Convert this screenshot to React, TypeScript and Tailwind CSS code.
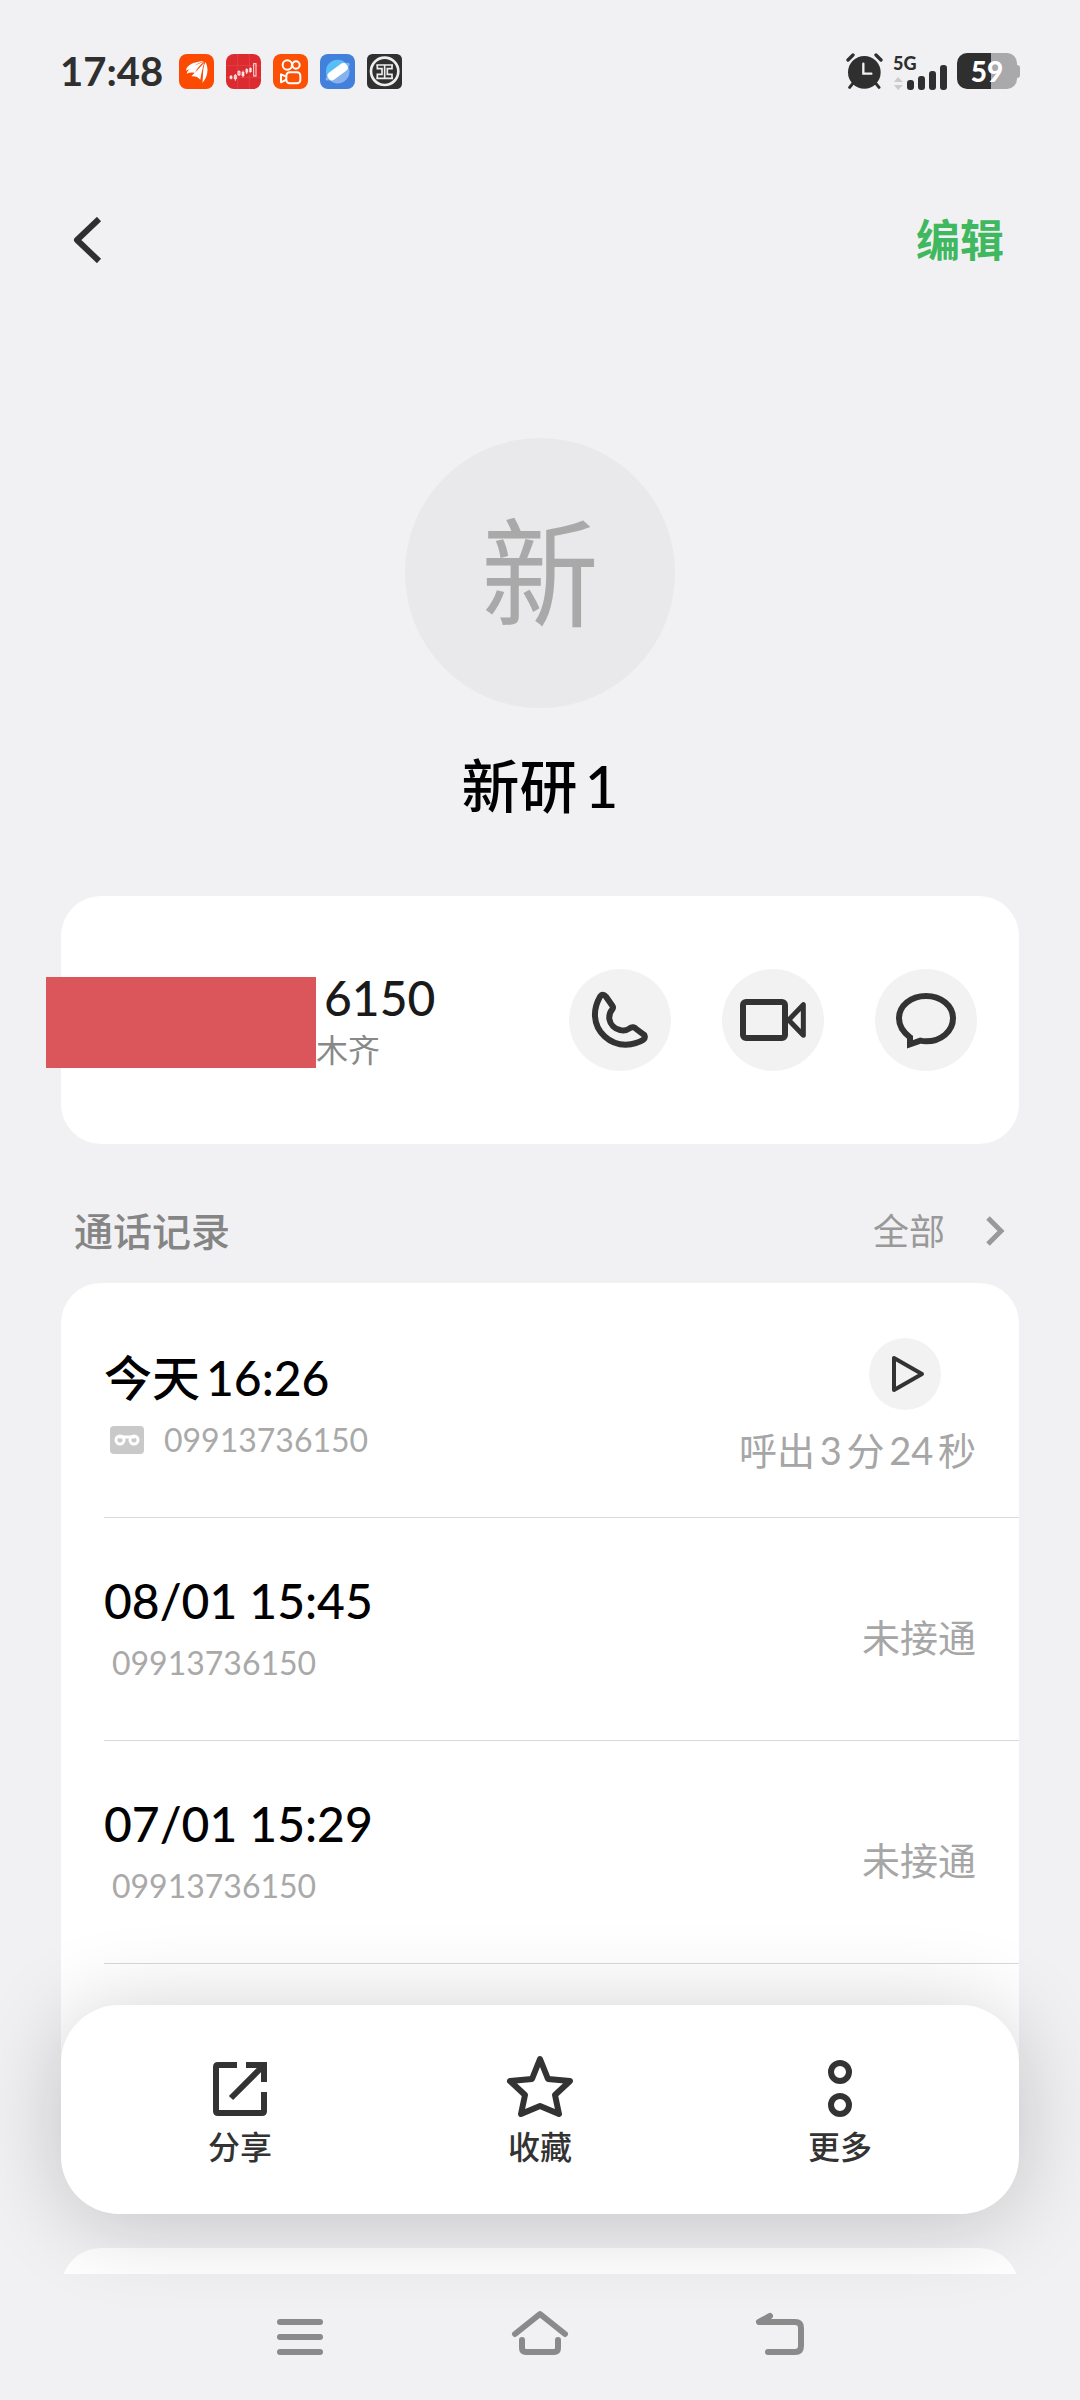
import type { ReactNode } from "react";

const calls = [
  { time: "今天16:26", number: "09913736150", status: "呼出3分24秒", recorded: true },
  { time: "08/01 15:45", number: "09913736150", status: "未接通", recorded: false },
  { time: "07/01 15:29", number: "09913736150", status: "未接通", recorded: false },
];

function StatusBar() {
  return (
    <div className="flex h-[142px] shrink-0 items-center justify-between px-[60px] text-[#2f2f2f]">
      <div className="flex items-center gap-3">
        <span className="mr-1 text-[40px] leading-[48px] font-bold">17:48</span>
        <svg className="size-[35px]" viewBox="0 0 105 105" fill="#fff">
          <rect width="105" height="105" rx="24" fill="#fc4a02" />
          <path d="M21 50C22 32 46 23 77 21C62 25 48 31 40 45C33 45 27 47 21 50Z" />
          <path d="M23 59C26 44 52 30 75 24C63 33 53 44 48 57C39 54 31 56 23 59Z" />
          <path d="M37 67C52 52 66 36 75 27C71 42 67 58 64 77C57 69 48 66 37 67Z" />
          <path d="M79 24C90 42 87 68 70 87C74 66 69 46 79 24Z" />
        </svg>
        <svg className="size-[35px]" viewBox="0 0 105 105">
          <rect width="105" height="105" rx="24" fill="#dc2a31" />
          <path d="M0 35H105M0 70H105M35 0V105M70 0V105" stroke="#e4474c" strokeWidth="2" />
          <g fill="none" stroke="#fde8e8" strokeWidth="3">
            <path d="M15 63V76M28 60V80M39 49V66M51 50V70M62 43V60M73 40V56" />
            <rect x="25" y="65" width="6" height="9" />
            <rect x="36" y="53" width="6" height="9" />
            <rect x="60" y="47" width="5" height="7" />
            <rect x="83" y="29" width="7" height="37" />
          </g>
          <path d="M11 66h8v8h-8zM47 54h8v12h-8zM70 42h7v12h-7z" fill="#fde8e8" />
        </svg>
        <svg className="size-[35px]" viewBox="0 0 105 105" fill="none" stroke="#fff" strokeWidth="6">
          <rect width="105" height="105" rx="24" fill="#fc5004" stroke="none" />
          <circle cx="43" cy="33" r="14" />
          <circle cx="69" cy="33" r="11" />
          <rect x="40" y="55" width="42" height="33" rx="10" />
          <path d="M40 68L24 61V85L40 77" strokeLinejoin="round" />
        </svg>
        <svg className="size-[35px]" viewBox="0 0 105 105">
          <rect width="105" height="105" rx="24" fill="#4380dc" />
          <circle cx="53" cy="52" r="35" fill="#59bdf8" />
          <path d="M19 62A35 35 0 0 0 87 44Z" fill="#88b2ee" />
          <ellipse cx="53" cy="53" rx="43" ry="12" transform="rotate(-35 53 53)" fill="#7fb6f2" />
          <rect x="19" y="40" width="68" height="26" rx="12" transform="rotate(-36 53 53)" fill="#fff" />
        </svg>
        <svg className="size-[35px]" viewBox="0 0 105 105" fill="none" stroke="#eee">
          <rect width="105" height="105" rx="16" fill="#303030" stroke="none" />
          <circle cx="53" cy="52" r="41" strokeWidth="8" />
          <path d="M28 33H78M28 73H78M53 33V43M53 62V73M53 43V62" strokeWidth="5" />
          <path d="M31 33V44H45V61H31V73M75 33V44H61V61H75V73" strokeWidth="5" />
        </svg>
      </div>
      <div className="flex items-center gap-[10px]">
        <svg className="h-9 w-[37px]" viewBox="0 0 111 108" fill="none" stroke="#2f2f2f" strokeLinecap="round">
          <circle cx="55" cy="58" r="49" fill="#2f2f2f" stroke="none" />
          <path d="M6 21L21 6M105 21L90 6" strokeWidth="10" />
          <path d="M20 92L11 103M90 92L99 103" strokeWidth="9" />
          <path d="M52 32V62H76" stroke="#f1f1f3" strokeWidth="7" />
        </svg>
        <div className="flex w-[54px] flex-col">
          <span className="text-[18px] leading-5 font-black">5G</span>
          <svg className="-mt-2 h-[25px] w-[54px]" viewBox="0 11 54 25" fill="#2f2f2f">
            <path d="M1 28L5 23L10 28ZM1 31H10L5 36Z" fill="#cbcbcd" />
            <rect x="14" y="26" width="7" height="10" rx="3" />
            <rect x="25" y="22" width="7" height="14" rx="3" />
            <rect x="36" y="17" width="7" height="19" rx="3" />
            <rect x="47" y="11" width="7" height="25" rx="3" />
          </svg>
        </div>
        <div className="flex items-center">
          <div className="flex h-9 w-[60px] items-center justify-center rounded-[10px] bg-linear-to-r from-[#2f2f2f] from-57% to-[#a9a9ab] to-57% text-[28px] leading-9 font-black text-white">
            59
          </div>
          <div className="h-[13px] w-[3px] rounded-r bg-[#a9a9ab]" />
        </div>
      </div>
    </div>
  );
}

function RoundButton({ label, children }: { label: string; children: ReactNode }) {
  return (
    <button aria-label={label} className="size-[102px] rounded-full bg-[#f2f2f2]">
      <svg className="size-full" viewBox="0 0 306 306" fill="none" stroke="#333" strokeWidth="18">
        {children}
      </svg>
    </button>
  );
}

function Action({ label, children }: { label: string; children: ReactNode }) {
  return (
    <button className="flex flex-1 flex-col items-center gap-2 text-[32px] leading-[40px] font-medium text-[#333]">
      <svg className="size-[66px]" viewBox="0 0 66 66" fill="none" stroke="#333" strokeWidth="6">
        {children}
      </svg>
      {label}
    </button>
  );
}

function NavButton({ label, d }: { label: string; d: string }) {
  return (
    <button aria-label={label} className="flex w-[240px] items-center justify-center">
      <svg className="size-[60px]" viewBox="0 0 60 60" fill="none" stroke="#8a8a8a" strokeWidth="6" strokeLinecap="round" strokeLinejoin="round">
        <path d={d} />
      </svg>
    </button>
  );
}

export default function App() {
  return (
    <div className="relative flex h-screen flex-col overflow-hidden bg-[#f1f1f3] font-['Lato','Noto_Sans_CJK_SC',sans-serif] [text-autospace:normal]">
      <StatusBar />

      <header className="flex h-[196px] shrink-0 items-center justify-between pr-[76px] pl-[72px]">
        <button aria-label="返回">
          <svg className="h-[46px] w-[30px]" viewBox="0 0 30 46" fill="none" stroke="#2f2f2f" strokeWidth="6" strokeLinejoin="round">
            <path d="M27 2L5 23L27 44" />
          </svg>
        </button>
        <button className="text-[44px] leading-[56px] font-bold text-[#3fb85f]">编辑</button>
      </header>

      <main className="min-h-0 flex-1 overflow-hidden px-[61px]">
        <div className="flex flex-col items-center pt-[100px]">
          <div className="flex size-[270px] items-center justify-center rounded-full bg-[#e9e9eb] text-[118px] leading-none text-[#a9a9a9]">
            新
          </div>
          <h1 className="mt-[39px] text-[58px] leading-[78px] font-medium text-black">新研1</h1>
        </div>

        <section className="mt-[71px] flex h-[248px] items-center justify-between rounded-[40px] bg-white pr-[42px]">
          <div className="-ml-[15px] flex items-center pt-1">
            <div className="h-[91px] w-[270px] bg-[#da565b]" />
            <div>
              <p className="pl-2 text-[48px] leading-[56px] font-medium text-[#1a1a1a]">6150</p>
              <p className="text-[32px] leading-[48px] text-[#888]">木齐</p>
            </div>
          </div>
          <div className="flex gap-[51px]">
            <RoundButton label="拨打电话">
              <path d="M111 83Q101 71 93 83C82 102 77 122 78 142C81 190 122 227 170 227C190 226 208 222 223 212Q230 206 226 198L203 181C197 174 189 172 182 178C172 185 162 186 153 183C138 180 124 168 121 150C120 138 122 130 130 121Q134 116 130 110Z" />
            </RoundButton>
            <RoundButton label="视频通话">
              <rect x="63" y="99" width="126" height="108" rx="9" />
              <path d="M200 153L244 107V199Z" strokeWidth="15" strokeLinejoin="round" />
            </RoundButton>
            <RoundButton label="发送信息">
              <path d="M105 226V205C85 190 72 170 72 148C72 110 108 81 153 81C198 81 234 110 234 148C234 187 198 217 153 217Q144 217 136 215Z" />
            </RoundButton>
          </div>
        </section>

        <div className="flex h-[139px] items-center justify-between pt-[35px] pr-[14px] pl-[13px]">
          <h2 className="text-[39px] leading-[48px] font-medium text-[#858585]">通话记录</h2>
          <a href="#all" className="flex items-center gap-10 text-[36px] leading-[48px] text-[#999]">
            全部
            <svg className="h-8 w-5" viewBox="0 0 20 32" fill="none" stroke="#999" strokeWidth="5">
              <path d="M3 3L16 16L3 29" />
            </svg>
          </a>
        </div>

        <ul className="rounded-[40px] bg-white py-3 pl-[43px]">
          {calls.map((call) => (
            <li key={call.time} className="flex h-[223px] items-center justify-between border-b border-[#d9d9d9] pr-[43px]">
              <div className="pt-1">
                <p className="text-[48px] leading-[64px] font-medium text-black">{call.time}</p>
                <p className={call.recorded ? "flex items-center gap-5 pl-[6px] text-[32px] leading-[60px] text-[#a9a9a9]" : "pl-2 text-[32px] leading-[60px] text-[#a9a9a9]"}>
                  {call.recorded && (
                    <svg className="h-7 w-[34px]" viewBox="0 0 34 28" fill="none" stroke="#fff" strokeWidth="3">
                      <rect width="34" height="28" rx="4" fill="#c9c9c9" stroke="none" />
                      <circle cx="10" cy="14" r="4" />
                      <circle cx="24" cy="14" r="4" />
                      <path d="M9 11H25" />
                    </svg>
                  )}
                  {call.number}
                </p>
              </div>
              <div className={call.recorded ? "flex flex-col items-end gap-3 pt-1" : "pt-4"}>
                {call.recorded && (
                  <button aria-label="播放录音" className="mr-[35px] size-[72px] rounded-full bg-[#f2f2f2]">
                    <svg className="size-full" viewBox="0 0 72 72" fill="none" stroke="#333" strokeWidth="4" strokeLinejoin="round">
                      <path d="M25 20V52L53 36Z" />
                    </svg>
                  </button>
                )}
                <span className="text-[38px] leading-[56px] text-[#a6a6a6]">{call.status}</span>
              </div>
            </li>
          ))}
          <li className="h-[223px]" />
        </ul>

        <section className="mt-[49px] h-[248px] rounded-[40px] bg-white" />
      </main>

      <nav className="flex h-[126px] shrink-0 justify-center">
        <NavButton label="最近任务" d="M10 15H50M10 30H50M10 45H50" />
        <NavButton label="主页" d="M5 27L30 7L55 27M12 33V41Q12 45 16 45H44Q48 45 48 41V33" />
        <NavButton label="返回上一级" d="M20 9L9 15H45Q51 15 51 21V39Q51 45 45 45H18" />
      </nav>

      <div className="absolute inset-x-[61px] bottom-[186px] flex h-[209px] items-center rounded-[58px] bg-white px-[29px] shadow-[0_8px_90px_rgba(0,0,0,0.2)]">
        <Action label="分享">
          <path d="M30 12H11Q9 12 9 14V58Q9 60 11 60H55Q57 60 57 58V39" />
          <path d="M39 12H57V29M57 12L24 45" />
        </Action>
        <Action label="收藏">
          <path d="M33 6L41 26L63 28L48 42L52 61L33 53L14 61L18 42L3 28L25 26Z" strokeLinejoin="round" />
        </Action>
        <Action label="更多">
          <circle cx="33" cy="19" r="9" />
          <circle cx="33" cy="52" r="9" />
        </Action>
      </div>
    </div>
  );
}
